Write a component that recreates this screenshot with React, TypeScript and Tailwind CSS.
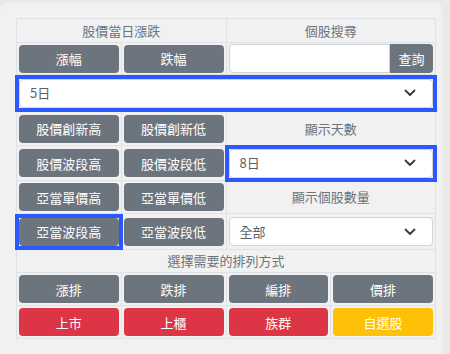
import React from 'react';

const font = { fontFamily: '"Noto Sans CJK TC", "Noto Sans", sans-serif' };

// square blue highlight box around a control
function Hl({ on, children }: { on?: boolean; children: React.ReactNode }) {
  return <div className={on ? 'outline-[4px] outline-solid outline-[#2c59ff]' : ''}>{children}</div>;
}

function Btn({ label, color = 'gray', outlined = false }: { label: string; color?: 'gray' | 'red' | 'yellow'; outlined?: boolean }) {
  const bg = color === 'red' ? 'bg-[#dc3545]' : color === 'yellow' ? 'bg-[#ffc107]' : 'bg-[#6c757d]';
  return (
    <Hl on={outlined}>
      <button className={`block w-full h-[28px] rounded-[4px] text-white text-[13px] leading-none ${bg}`}>{label}</button>
    </Hl>
  );
}

function Chevron() {
  return (
    <svg width="12" height="8" viewBox="0 0 12 8" fill="none">
      <path d="M1.5 1.5 L6 6 L10.5 1.5" stroke="#343a40" strokeWidth="1.8" strokeLinecap="round" strokeLinejoin="round" />
    </svg>
  );
}

function Select({ value, outlined = false }: { value: string; outlined?: boolean }) {
  return (
    <Hl on={outlined}>
      <div className="flex items-center justify-between h-[29px] bg-white border border-[#ced4da] rounded-[4px] pl-[10px] pr-[16px] text-[13px] text-[#5a6168]">
        <span>{value}</span>
        <Chevron />
      </div>
    </Hl>
  );
}

const td = 'border border-[#dee2e6] px-[2px] py-0 align-middle';
const th = 'border border-[#dee2e6] text-center text-[13px] font-normal text-[#6c757d] align-middle';

export default function App() {
  return (
    <div className="w-[450px] h-[354px] bg-[#e9e9e9] pt-[3px] pr-[8px] overflow-hidden" style={font}>
      <div className="h-full bg-[#f1f1f1] rounded-t-[6px] pt-[15px] pl-[16px]">
        <table className="w-[420px] border-collapse table-fixed">
          <tbody>
            <tr className="h-[24px]">
              <td colSpan={2} className={th}>股價當日漲跌</td>
              <td colSpan={2} className={th}>個股搜尋</td>
            </tr>
            <tr className="h-[32px]">
              <td className={td}><Btn label="漲幅" /></td>
              <td className={td}><Btn label="跌幅" /></td>
              <td colSpan={2} className={td}>
                <div className="flex h-[29px]">
                  <input className="flex-1 min-w-0 bg-white border border-[#ced4da] rounded-l-[4px]" />
                  <button className="w-[43px] bg-[#6c757d] text-white text-[13px] rounded-r-[4px]">查詢</button>
                </div>
              </td>
            </tr>
            <tr className="h-[37px]">
              <td colSpan={4} className={td}><Select value="5日" outlined /></td>
            </tr>
            <tr className="h-[34px]">
              <td className={td}><Btn label="股價創新高" /></td>
              <td className={td}><Btn label="股價創新低" /></td>
              <td colSpan={2} className={th}>顯示天數</td>
            </tr>
            <tr className="h-[35px]">
              <td className={td}><Btn label="股價波段高" /></td>
              <td className={td}><Btn label="股價波段低" /></td>
              <td colSpan={2} className={td}><Select value="8日" outlined /></td>
            </tr>
            <tr className="h-[33px]">
              <td className={td}><Btn label="亞當單價高" /></td>
              <td className={td}><Btn label="亞當單價低" /></td>
              <td colSpan={2} className={th}>顯示個股數量</td>
            </tr>
            <tr className="h-[36px]">
              <td className={td}><Btn label="亞當波段高" outlined /></td>
              <td className={td}><Btn label="亞當波段低" /></td>
              <td colSpan={2} className={td}><Select value="全部" /></td>
            </tr>
            <tr className="h-[23px]">
              <td colSpan={4} className={th}>選擇需要的排列方式</td>
            </tr>
            <tr className="h-[33px]">
              <td className={td}><Btn label="漲排" /></td>
              <td className={td}><Btn label="跌排" /></td>
              <td className={td}><Btn label="編排" /></td>
              <td className={td}><Btn label="價排" /></td>
            </tr>
            <tr className="h-[33px]">
              <td className={td}><Btn label="上市" color="red" /></td>
              <td className={td}><Btn label="上櫃" color="red" /></td>
              <td className={td}><Btn label="族群" color="red" /></td>
              <td className={td}><Btn label="自選股" color="yellow" /></td>
            </tr>
          </tbody>
        </table>
      </div>
    </div>
  );
}
